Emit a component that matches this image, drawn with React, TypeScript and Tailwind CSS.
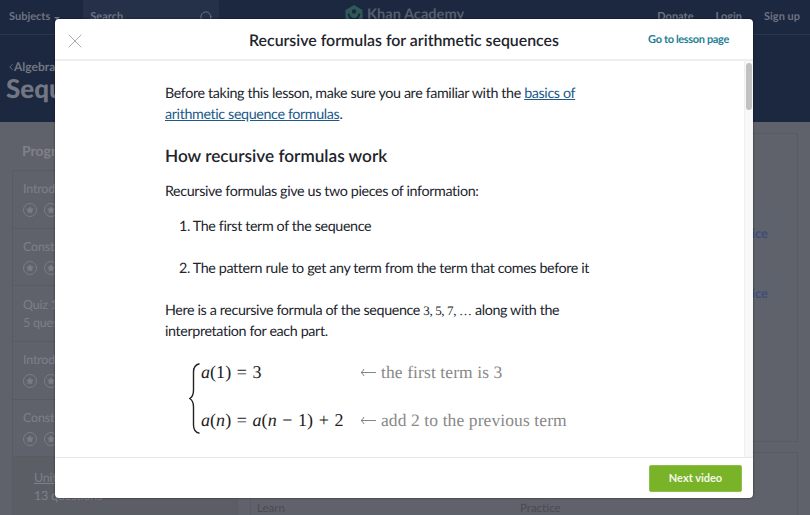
import { Search, X, ChevronLeft, Star } from "lucide-react";

function SkillRow({ title }: { title: string }) {
  return (
    <div className="h-[57.5px] border-b border-[#585b64] px-[10px] pt-[10px]">
      <p className="text-[12.5px] leading-[16px] tracking-[-0.2px] text-[#7d8087]">{title}</p>
      <div className="mt-[6px] flex gap-[7px]">
        {[0, 1, 2].map((i) => (
          <span key={i} className="flex h-[14px] w-[14px] items-center justify-center rounded-full border border-[#7a7d84]">
            <Star className="h-[8px] w-[8px] fill-[#7a7d84] text-[#7a7d84]" />
          </span>
        ))}
      </div>
    </div>
  );
}

function PracticeCard() {
  return (
    <div className="flex h-[48px] items-center justify-end rounded-[2px] bg-[#5e626d] pr-[14px] pt-[16px]">
      <span className="text-[13px] font-bold text-[#3f4c78]">Practice</span>
    </div>
  );
}

function KhanLogo() {
  return (
    <svg width="18" height="20" viewBox="0 0 18 20" aria-hidden="true">
      <path d="M9 0L17.5 5V15L9 20L0.5 15V5Z" fill="#2f5b57" />
      <circle cx="9" cy="6.5" r="2.2" fill="#1c2740" />
      <path d="M3.5 8.5C4 12 6 14 9 14.5C12 14 14 12 14.5 8.5" fill="none" stroke="#1c2740" strokeWidth="2" />
    </svg>
  );
}

function BackgroundPage() {
  return (
    <div className="h-[515px] overflow-hidden bg-[#60626b]">
      <header className="h-[122px] bg-[#1c2740]">
        <div className="relative flex h-[35px] items-center justify-between border-b border-[#2b3550] pl-[9px] pr-[10px] text-[11px] font-bold text-[#6d7482]">
          <div className="flex items-center">
            <span>Subjects</span>
            <span className="ml-[4px] mt-[2px] h-0 w-0 border-x-[3px] border-t-[3px] border-x-transparent border-t-[#6d7482]" />
            <div className="ml-[23px] flex h-[34px] w-[136px] items-center justify-between rounded-[2px] bg-[#253049] pl-[7px] pr-[5px]">
              <span>Search</span>
              <Search className="h-[15px] w-[15px]" strokeWidth={1.5} />
            </div>
          </div>
          <div className="absolute left-[345px] top-[4px] flex items-center gap-[4px] text-[14.6px] font-bold text-[#55606e]">
            <KhanLogo />
            <span>Khan Academy</span>
          </div>
          <div className="flex items-center gap-[22px]">
            <span>Donate</span>
            <span>Login</span>
            <span>Sign up</span>
          </div>
        </div>
        <div className="pl-[7px] pt-[24px] text-[#727783]">
          <div className="flex items-center text-[12px] font-bold leading-[16px]">
            <ChevronLeft className="-ml-[1px] -mr-[2px] h-[12px] w-[10px]" strokeWidth={2} />
            <span>Algebra</span>
          </div>
          <h2 className="-ml-[1px] -mt-[2px] text-[26px] font-black leading-[30px]">Sequences</h2>
        </div>
      </header>
      <div className="flex gap-[12px] px-[12px] pt-[11px]">
        <aside className="w-[226px] shrink-0">
          <h3 className="pl-[10px] pt-[8px] text-[14px] font-bold leading-[20px] text-[#7f8188]">Progress</h3>
          <div className="mt-[9px] border border-[#585b64]">
            <SkillRow title="Introduction" />
            <SkillRow title="Construct" />
            <div className="h-[56px] border-b border-[#585b64] px-[10px] pt-[10px] text-[12.5px] leading-[18px] tracking-[-0.2px] text-[#7d8087]">
              <p>Quiz 1</p>
              <p>5 questions</p>
            </div>
            <SkillRow title="Introduction" />
            <SkillRow title="Construct" />
            <div className="h-[60px] bg-[#5c5e66] pl-[21px] pt-[12px] text-[12.5px] leading-[18px] tracking-[-0.2px] text-[#7d8087]">
              <p className="underline">Unit test</p>
              <p>13 questions</p>
            </div>
          </div>
        </aside>
        <main className="flex-1">
          <div className="h-[309px] border border-[#585b64] px-[15px] pt-[68px]">
            <div className="flex flex-col gap-[12px]">
              <PracticeCard />
              <PracticeCard />
            </div>
          </div>
          <div className="mt-[10px] h-[70px] border border-[#585b64] pl-[6px] pt-[47px] text-[11.5px] text-[#494b52]">
            <div className="flex">
              <span className="w-[263px]">Learn</span>
              <span>Practice</span>
            </div>
          </div>
        </main>
      </div>
    </div>
  );
}

function Arrow() {
  return (
    <svg width="16" height="9" viewBox="0 0 16 9" className="mr-[5px] shrink-0" aria-hidden="true">
      <path d="M16 4.5H1M4 1C3.4 2.6 2.4 3.8 1 4.5C2.4 5.2 3.4 6.4 4 8" fill="none" stroke="#777" strokeWidth="0.9" />
    </svg>
  );
}

function Formula() {
  const left = "font-['Liberation_Serif',serif] text-[18px] tracking-[0.05px] [word-spacing:1px] text-[#222]";
  const note = "font-['Liberation_Serif',serif] text-[17.5px] tracking-[0.1px] text-[#888]";
  return (
    <div className="mt-[18px] flex h-[84px] items-start pl-[24px]">
      <svg width="11" height="71" viewBox="0 0 11 71" className="mr-[1px] mt-[3px] shrink-0" aria-hidden="true">
        <path d="M10.5 0.7C6.5 1.5 4.5 4 4.5 9V27C4.5 31 3.5 34 0.7 35.5C3.5 37 4.5 40 4.5 44V62C4.5 67 6.5 69.5 10.5 70.3" fill="none" stroke="#222" strokeWidth="1.4" />
      </svg>
      <div className="flex flex-col gap-[24px]">
        <div className="flex h-[24px] items-center">
          <span className={`w-[159px] ${left}`}><i>a</i>(1) = 3</span>
          <Arrow />
          <span className={note}>the first term is 3</span>
        </div>
        <div className="flex h-[24px] items-center">
          <span className={`w-[159px] ${left}`}><i>a</i>(<i>n</i>) = <i>a</i>(<i>n</i> − 1) + 2</span>
          <Arrow />
          <span className={note}>add 2 to the previous term</span>
        </div>
      </div>
    </div>
  );
}

export default function App() {
  return (
    <div className="relative h-[515px] w-[810px] overflow-hidden font-['Lato','Noto_Sans',sans-serif] [text-rendering:geometricPrecision]">
      <BackgroundPage />

      {/* modal */}
      <div className="absolute left-[55px] top-[19px] flex h-[479px] w-[698px] flex-col overflow-hidden rounded-[4px] bg-white shadow-[0_0_2px_rgba(0,0,0,0.7)]">
        <div className="grid h-[42px] shrink-0 grid-cols-[1fr_auto_1fr] items-center border-b-2 border-[#eeeeef] px-[24px] pt-[3px]">
          <X className="-ml-[16px] h-[24px] w-[24px] text-[#a9abaf]" strokeWidth={1} />
          <h1 className="text-center text-[15.9px] font-semibold text-[#21242c]">
            Recursive formulas for arithmetic sequences
          </h1>
          <a className="justify-self-end text-[11px] font-bold tracking-[-0.35px] text-[#1f7f96]">Go to lesson page</a>
        </div>

        <div className="flex min-h-0 flex-1">
          <div className="flex-1 overflow-hidden pl-[110px] pr-[150px] pt-[22px] text-[14.3px] leading-[21px] tracking-[-0.37px] text-[#21242c]">
            <p>
              Before taking this lesson, make sure you are familiar with the{" "}
              <a className="text-[#1b5a8a] underline">basics of arithmetic sequence formulas</a>.
            </p>
            <h2 className="mt-[19px] text-[17.2px] font-semibold leading-[24px] tracking-normal text-[#21242c]">How recursive formulas work</h2>
            <p className="mt-[13px]">Recursive formulas give us two pieces of information:</p>
            <ol className="mt-[14px] pl-[14px]">
              <li>1. The first term of the sequence</li>
              <li className="mt-[21px]">2. The pattern rule to get any term from the term that comes before it</li>
            </ol>
            <p className="mt-[22px] leading-[20.5px]">
              Here is a recursive formula of the sequence{" "}
              <span className="font-['Liberation_Serif',serif] text-[13px]">3, 5, 7, …</span> along with the interpretation for each part.
            </p>
            <Formula />
          </div>
          <div className="w-[9px] shrink-0 border-l border-[#efeff0] bg-[#f8f8f8] px-[1px] pt-[2px]">
            <div className="h-[47px] rounded-full bg-[#c1c1c1]" />
          </div>
        </div>

        <div className="flex h-[41px] shrink-0 items-center justify-end border-t border-[#e8e8e9] pr-[11px]">
          <button className="h-[27px] w-[93px] rounded-[2px] border border-[#8fbe4c] bg-[#78b328] text-[11px] font-bold text-[#f4f8ec]">Next video</button>
        </div>
      </div>
    </div>
  );
}
